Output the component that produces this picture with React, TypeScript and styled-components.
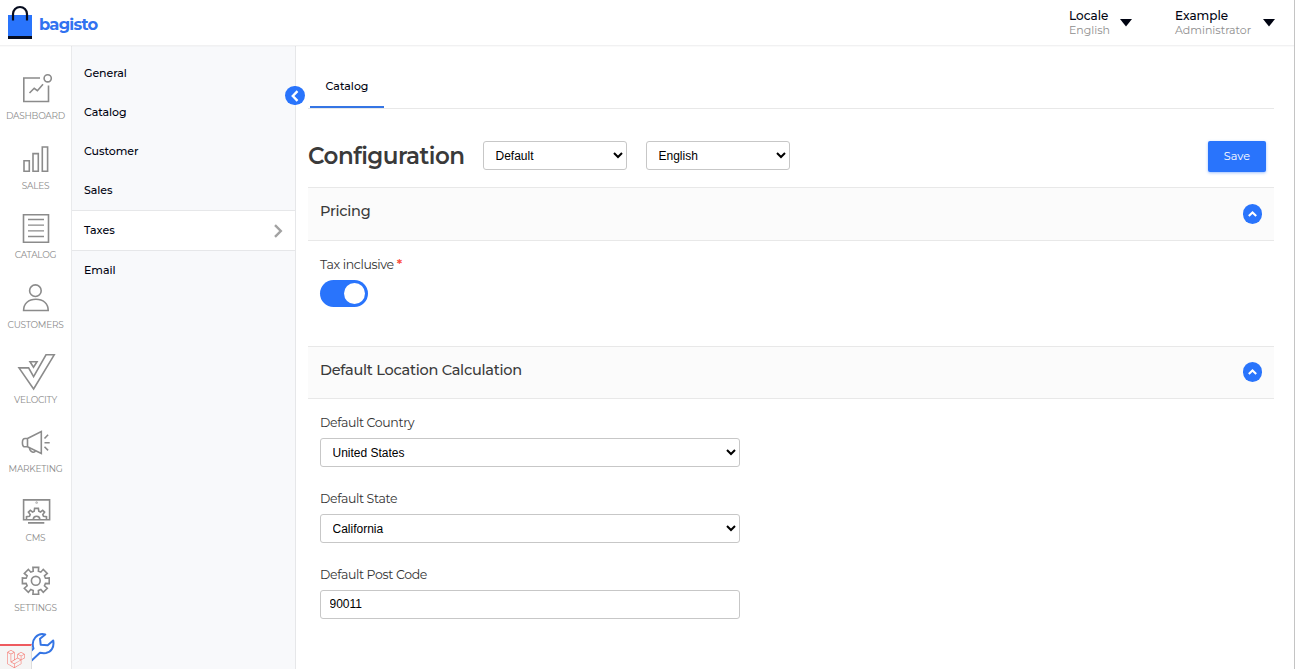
import React from 'react';
import styled, { createGlobalStyle } from 'styled-components';
import { FaLaravel } from 'react-icons/fa';

const BLUE = '#2974fc';

const GlobalStyle = createGlobalStyle`
  *, *::before, *::after { box-sizing: border-box; }
  html, body { margin: 0; background: #fff; overflow: hidden; }
  body { font-family: Montserrat, Inter, sans-serif; color: #000311; }
`;

const Page = styled.div`
  display: flex;
  flex-direction: column;
  width: 100%;
  height: 669px;
  overflow: hidden;
  border-right: 1px solid #c4c4c4;
`;

const Label = styled.span<{ $track?: number }>`
  letter-spacing: ${(p) => p.$track ?? 0}px;
  white-space: nowrap;
`;

const Header = styled.header`
  display: flex;
  flex: none;
  align-items: flex-start;
  height: 46px;
  padding: 5px 19.5px 0 8px;
  background: #fff;
  border-bottom: 1px solid #f1f1f2;
  box-shadow: 0 1px 1px rgba(0, 0, 0, 0.02);
  z-index: 1;
`;

const Brand = styled.a`
  display: flex;
  gap: 7px;
  flex: 1;
`;

const BrandName = styled(Label)`
  padding-top: 9px;
  font-size: 16.3px;
  line-height: 20px;
  font-weight: 700;
  color: #3172f0;
`;

const Account = styled.div<{ $width: number }>`
  display: flex;
  justify-content: space-between;
  align-items: center;
  width: ${(p) => p.$width}px;
  padding-top: 3px;
  & + & { margin-left: 43px; }
`;

const AccountText = styled.div`
  display: flex;
  flex-direction: column;
`;

const AccountName = styled(Label)`
  font-size: 12px;
  line-height: 15px;
  font-weight: 500;
`;

const AccountRole = styled(Label)`
  font-size: 11px;
  line-height: 14px;
  color: #8e8e8e;
`;

const Body = styled.div`
  display: flex;
  flex: 1;
  min-height: 0;
`;

const Nav = styled.nav`
  display: flex;
  flex-direction: column;
  flex: none;
  width: 72px;
  border-right: 1px solid #e9eaec;
  position: relative;
`;

const NavItem = styled.a<{ $height: number }>`
  display: flex;
  flex: none;
  flex-direction: column;
  justify-content: flex-end;
  align-items: center;
  width: 71px;
  height: ${(p) => p.$height}px;
`;

const NavIcon = styled.svg`
  display: block;
  width: 41px;
  height: 40px;
  fill: none;
  stroke: #8b8b8b;
  stroke-width: 1.6;
`;

const NavLabel = styled(Label)`
  height: 12px;
  font-size: 9px;
  line-height: 14px;
  color: #8c8c8c;
`;

const ConfigureLink = styled.a`
  display: flex;
  padding: 19px 0 0 30px;
`;

const DebugBadge = styled.div`
  position: absolute;
  left: 0;
  bottom: 0;
  display: flex;
  justify-content: center;
  align-items: center;
  width: 32px;
  height: 25px;
  padding: 2px 0 0 0;
  background: #f5f5f5;
  border-top: 2px solid #ee5a5f;
  border-right: 1px solid #ddd;
  color: #f5746c;
`;

const SubNav = styled.nav`
  position: relative;
  flex: none;
  width: 224px;
  padding-top: 8px;
  background: #f8f9fb;
  border-right: 1px solid #e6e7e9;
`;

const SubItem = styled.a<{ $active?: boolean }>`
  display: flex;
  align-items: center;
  justify-content: space-between;
  height: ${(p) => (p.$active ? 41 : 39)}px;
  padding: 0 12px;
  font-size: 11px;
  font-weight: 500;
  background: ${(p) => (p.$active ? '#fff' : 'transparent')};
  border: solid #e6e7e9;
  border-width: ${(p) => (p.$active ? '1px 0' : '0')};
`;

const SubLabel = styled(Label)`
  padding-bottom: 2px;
`;

const CollapseButton = styled.button`
  position: absolute;
  top: 40px;
  right: -10px;
  display: flex;
  align-items: center;
  justify-content: center;
  width: 20px;
  height: 19px;
  padding: 0;
  border: 0;
  border-radius: 10px;
  background: ${BLUE};
`;

const Main = styled.main`
  flex: 1;
  min-width: 0;
  padding: 16px 20px 0 12px;
`;

const Tabs = styled.div`
  display: flex;
  height: 47px;
  padding-left: 2px;
  border-bottom: 1px solid #e8e8e8;
`;

const Tab = styled.a`
  display: flex;
  justify-content: center;
  width: 74px;
  padding-top: 17px;
  font-size: 11px;
  line-height: 14px;
  font-weight: 500;
  border-bottom: 2px solid #3575e4;
`;

const Toolbar = styled.div`
  display: flex;
  align-items: flex-start;
  height: 78px;
  padding: 32px 8px 0 0;
`;

const Title = styled.h1`
  width: 175px;
  margin: 0;
  font-size: 23px;
  line-height: 31px;
  font-weight: 600;
  letter-spacing: -0.5px;
  color: #3a3a3a;
`;

const Select = styled.select<{ $wide?: boolean }>`
  display: block;
  width: ${(p) => (p.$wide ? 420 : 144)}px;
  height: 29px;
  padding: 0 0 0 7.5px;
  border: 1px solid #c7c7c7;
  border-radius: 3px;
  background: #fff;
  font: 12px "Liberation Sans", Arial, sans-serif;
  color: #000;
  & + & { margin-left: 19px; }
`;

const TextInput = styled.input`
  display: block;
  width: 420px;
  height: 29px;
  padding: 0 8.5px 2px;
  border: 1px solid #c7c7c7;
  border-radius: 3px;
  font: 12px "Liberation Sans", Arial, sans-serif;
  color: #000;
`;

const SaveButton = styled.button`
  width: 58px;
  height: 31px;
  margin-left: auto;
  padding: 0 0 1px;
  border: 0;
  border-radius: 2px;
  background: ${BLUE};
  box-shadow: 0 1px 3px rgba(41, 116, 252, 0.45);
  color: #fff;
  font: 400 11.3px Montserrat, Inter, sans-serif;
`;

const SectionHeader = styled.div<{ $height: number }>`
  display: flex;
  justify-content: space-between;
  align-items: flex-start;
  height: ${(p) => p.$height}px;
  padding: 13px 12px 0;
  background: #fbfbfb;
  border: solid #e8e8e8;
  border-width: 1px 0;
  font-size: 14.5px;
  line-height: 20px;
  font-weight: 500;
  color: #3a3a3a;
`;

const SectionToggle = styled.button<{ $offset: number }>`
  display: flex;
  align-items: center;
  justify-content: center;
  width: 19px;
  height: 20px;
  margin-top: ${(p) => p.$offset}px;
  padding: 0;
  border: 0;
  border-radius: 10px;
  background: ${BLUE};
`;

const SectionBody = styled.div<{ $height?: number }>`
  height: ${(p) => (p.$height ? p.$height + 'px' : 'auto')};
  padding: 15px 12px 0;
`;

const Field = styled.div`
  & + & { margin-top: 23px; }
`;

const FieldLabel = styled.label`
  display: flex;
  height: 24px;
  font-size: 12.5px;
  line-height: 18px;
  letter-spacing: -0.35px;
  color: #333;
`;

const Required = styled.span`
  margin-left: 3px;
  font-size: 13px;
  line-height: 16px;
  font-weight: 600;
  color: #fc4f3f;
`;

const Switch = styled.div`
  display: flex;
  align-items: center;
  justify-content: flex-end;
  width: 48px;
  height: 27px;
  padding-right: 3px;
  border-radius: 14px;
  background: ${BLUE};
`;

const Knob = styled.span`
  width: 21px;
  height: 21px;
  border-radius: 50%;
  background: #fff;
`;

const gearPath = (cx: number, cy: number, outer: number, inner: number) => {
  const points: string[] = [];
  for (let i = 0; i < 8; i++) {
    const a = (i * Math.PI) / 4 - Math.PI / 2;
    const steps: [number, number][] = [[-0.26, inner], [-0.21, outer], [0.21, outer], [0.26, inner]];
    steps.forEach(([d, r]) =>
      points.push(`${(cx + r * Math.cos(a + d)).toFixed(2)} ${(cy + r * Math.sin(a + d)).toFixed(2)}`),
    );
  }
  return `M${points.join('L')}Z`;
};

const navItems = [
  { label: 'DASHBOARD', height: 75, icon: (
    <><path d="M25 9H8.800v23.500h24.700V16.500" /><circle cx="32.700" cy="9.300" r="3.600" /><path d="M14.500 24l4.700-4.700 3.200 2.400 5.600-6.400" /></>
  ) },
  { label: 'SALES', height: 70, icon: (
    <path d="M9 21.700h5.300v10.500H9zM18 14.600h5.300v17.600H18zM27.300 8h5.300v24.200h-5.300z" />
  ) },
  { label: 'CATALOG', height: 69, icon: (
    <><path d="M8.500 6.700h25v27.600h-25z" /><path strokeWidth="1.3" d="M13 11.500h16M13 17.200h16M13 22.800h16M13 28.500h16" /></>
  ) },
  { label: 'CUSTOMERS', height: 70, icon: (
    <><circle cx="20.400" cy="12.700" r="5.800" /><path d="M8.600 32.500h24.600c0-7-5-11.200-12.300-11.200S8.600 25.500 8.600 32.500z" /></>
  ) },
  { label: 'VELOCITY', height: 75, icon: (
    <><path d="M4 14.900h9.600l5 8.800L31 1.800h8.200L18.600 36z" /><path d="M15 8.700h7l-3.500 5.500z" /></>
  ) },
  { label: 'MARKETING', height: 69, icon: (
    <><path d="M12.500 16.500L26.300 9.500v22L12.500 24.800M12.500 16.500v8.300M12.500 16.500h-2.400c-3.600 0-3.600 8.300 0 8.300h2.400" />
    <path d="M14.500 26c.5 4.500 5 5.500 6 2.500M29.500 16.500l3.600-3.800M29.500 20.700h5.200M29.500 24.800l3.600 3.600" /></>
  ) },
  { label: 'CMS', height: 69, icon: (
    <><path d="M8.600 8.900h26v19.800h-26zM13 31.900h16.300" /><path d="M11.500 28.700v-3l3-.5.7-1.700-1.800-2.400 1.900-1.700 2.200 1.600 1.700-.7.400-2.900h3.800l.4 2.900 1.700.7 2.200-1.600 1.900 1.700-1.800 2.400.7 1.700 3 .5v3M18.300 28.500c0-4.400 6.500-4.400 6.500 0" />
    <circle cx="21.600" cy="11.700" r="0.300" /></>
  ) },
  { label: 'SETTINGS', height: 70, icon: (
    <><path d={gearPath(20.8, 19.8, 13.7, 10)} /><circle cx="20.800" cy="19.800" r="4.400" /></>
  ) },
];

const subItems = [
  { label: 'General' },
  { label: 'Catalog' },
  { label: 'Customer' },
  { label: 'Sales' },
  { label: 'Taxes', active: true },
  { label: 'Email' },
];

const Caret = () => (
  <svg width="12" height="8" viewBox="0 0 12 8"><path d="M0 0h12L6 7.500z" fill="#000311" /></svg>
);

const ChevronUp = () => (
  <svg width="9" height="6" viewBox="0 0 9 6" fill="none" stroke="#fff" strokeWidth="2.100">
    <path d="M.8 5l3.700-3.500L8.200 5" />
  </svg>
);

export default function App() {
  return (
    <Page>
      <GlobalStyle />
      <Header>
        <Brand>
          <svg width="24" height="34" viewBox="0 0 24 34">
            <path d="M0 10h24v21H0z" fill={BLUE} />
            <path d="M0 31h24v3H0z" fill="#060c1f" />
            <path d="M5 15.500V9a7 7 0 0 1 14 0v6.500" fill="none" stroke="#060c1f" strokeWidth="2.200" />
          </svg>
          <BrandName $track={-0.75}>bagisto</BrandName>
        </Brand>
        <Account $width={63}>
          <AccountText>
            <AccountName>Locale</AccountName>
            <AccountRole>English</AccountRole>
          </AccountText>
          <Caret />
        </Account>
        <Account $width={99.5}>
          <AccountText>
            <AccountName>Example</AccountName>
            <AccountRole>Administrator</AccountRole>
          </AccountText>
          <Caret />
        </Account>
      </Header>
      <Body>
        <Nav>
          {navItems.map((item) => (
            <NavItem key={item.label} $height={item.height}>
              <NavIcon viewBox="0 0 41 40">{item.icon}</NavIcon>
              <NavLabel $track={-0.25}>{item.label}</NavLabel>
            </NavItem>
          ))}
          <ConfigureLink>
            <svg width="26" height="32" viewBox="0 0 26 32" fill="none" stroke="#3575e4" strokeWidth="2">
              <path d="M15.200 2.500C7.500.5.500 7.500 3.500 16.500L-5 25l5 5L10 20.800c3 .5 4.500.4 6 .2 5-.8 8.500-5.500 7.200-12.500l-5.500 4.800-7-.6-.7-6z" strokeLinejoin="round" />
            </svg>
          </ConfigureLink>
          <DebugBadge><FaLaravel size={18} /></DebugBadge>
        </Nav>
        <SubNav>
          {subItems.map((item) => (
            <SubItem key={item.label} $active={item.active}>
              <SubLabel $track={-0.05}>{item.label}</SubLabel>
              {item.active && (
                <svg width="9" height="14" viewBox="0 0 9 14" fill="none" stroke="#a2a2a2" strokeWidth="2.400">
                  <path d="M1 1.200l5.800 5.800L1 12.800" />
                </svg>
              )}
            </SubItem>
          ))}
          <CollapseButton>
            <svg width="8" height="12" viewBox="0 0 8 12" fill="none" stroke="#fff" strokeWidth="2.400">
              <path d="M6.500 1.200L1.800 6l4.700 4.800" />
            </svg>
          </CollapseButton>
        </SubNav>
        <Main>
          <Tabs><Tab><Label>Catalog</Label></Tab></Tabs>
          <Toolbar>
            <Title>Configuration</Title>
            <Select><option>Default</option></Select>
            <Select><option>English</option></Select>
            <SaveButton>Save</SaveButton>
          </Toolbar>
          <SectionHeader $height={54}>
            <Label $track={-0.25}>Pricing</Label>
            <SectionToggle $offset={3}><ChevronUp /></SectionToggle>
          </SectionHeader>
          <SectionBody $height={105}>
            <Field>
              <FieldLabel>Tax inclusive<Required>*</Required></FieldLabel>
              <Switch><Knob /></Switch>
            </Field>
          </SectionBody>
          <SectionHeader $height={53}>
            <Label $track={-0.25}>Default Location Calculation</Label>
            <SectionToggle $offset={2}><ChevronUp /></SectionToggle>
          </SectionHeader>
          <SectionBody>
            <Field>
              <FieldLabel>Default Country</FieldLabel>
              <Select $wide><option>United States</option></Select>
            </Field>
            <Field>
              <FieldLabel>Default State</FieldLabel>
              <Select $wide><option>California</option></Select>
            </Field>
            <Field>
              <FieldLabel>Default Post Code</FieldLabel>
              <TextInput defaultValue="90011" />
            </Field>
          </SectionBody>
        </Main>
      </Body>
    </Page>
  );
}
